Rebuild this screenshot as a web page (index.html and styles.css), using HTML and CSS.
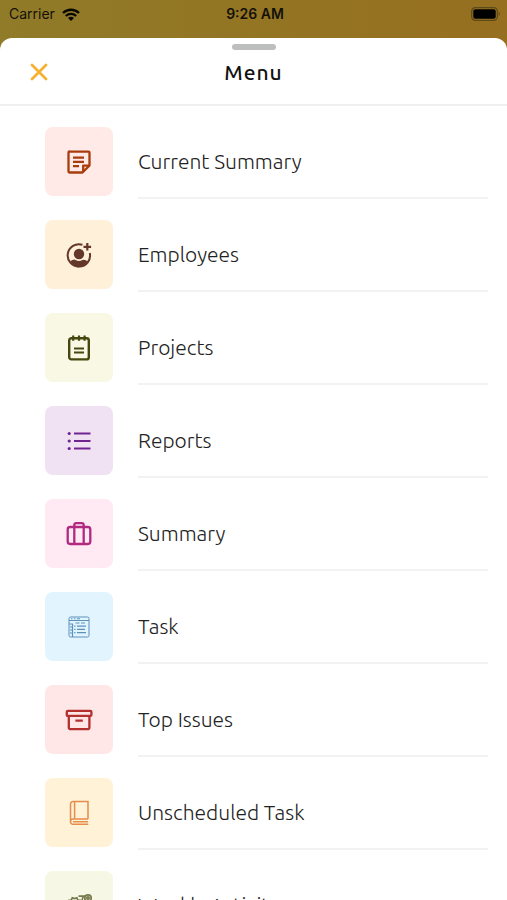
FILE: index.html
```
<!DOCTYPE html>
<html lang="en">
<head>
<meta charset="utf-8">
<meta name="viewport" content="width=device-width, initial-scale=1">
<title>Menu</title>
<link rel="stylesheet" href="styles.css">
</head>
<body>
<div class="screen">
  <div class="status">
    <div class="carrier">
      <span>Carrier</span>
      <svg class="wifi" viewBox="0 0 18 13" aria-hidden="true"><path d="M1 5a11.5 11.5 0 0 1 16 0M3.8 8a7.5 7.5 0 0 1 10.4 0" fill="none" stroke="#080704" stroke-width="2.3"/><path d="M9 13 6 10.1a4.4 4.4 0 0 1 6 0z" fill="#080704"/></svg>
    </div>
    <time class="clock">9:26 AM</time>
    <svg class="battery" viewBox="0 0 30 14" aria-hidden="true"><rect x=".7" y=".7" width="25.6" height="12.6" rx="3.6" fill="none" stroke="#5d4919" stroke-width="1.2"/><rect x="2.3" y="2.3" width="22.4" height="9.4" rx="2" fill="#000"/><path d="M27.6 4.8q2.4 2.2 0 4.4z" fill="#5d4919"/></svg>
  </div>
  <main class="sheet">
    <header class="header">
      <div class="grabber"></div>
      <div class="bar">
        <button class="close" type="button" aria-label="Close"><svg viewBox="0 0 18 18"><path d="m2 2 14 14M16 2 2 16" fill="none" stroke="#f6b032" stroke-width="2.8" stroke-linecap="round"/></svg></button>
        <h1>Menu</h1>
      </div>
    </header>
    <nav>
      <ul class="menu">
        <li><a href="#current-summary"><span class="tile coral"><svg viewBox="0 0 28 28"><g fill="none" stroke="currentColor" stroke-width="2.3" stroke-linejoin="round"><path d="M4.5 3.6h19a1 1 0 0 1 1 1v12.9l-7 7h-13a1 1 0 0 1-1-1v-19a1 1 0 0 1 1-1z"/><path d="M24.3 17.7h-6.1v6.1"/><path d="M8 9.7h11M8 13.9h11M8 18.1h6"/></g></svg></span><span class="label">Current Summary</span></a></li>
        <li><a href="#employees"><span class="tile peach"><svg viewBox="0 0 28 28"><path d="M17.4 3.8A11.2 11.2 0 1 0 24.8 12" fill="none" stroke="currentColor" stroke-width="2"/><circle cx="14" cy="13" r="5.2" fill="currentColor"/><path d="M5.2 20.2q3.5-2.3 5.3-1.3 3.5 2 7 0 2-.9 5.3 1.3-3.1 5.4-8.8 5.4t-8.8-5.4z" fill="currentColor"/><path d="M22.3 2v7.6M18.5 5.8h7.6" stroke="currentColor" stroke-width="2.2"/></svg></span><span class="label">Employees</span></a></li>
        <li><a href="#projects"><span class="tile olive"><svg viewBox="0 0 28 28"><rect x="4.2" y="4.2" width="19.6" height="21.2" rx="2.2" fill="none" stroke="currentColor" stroke-width="2.4"/><path d="M8.2 1.5v5.2M14 1.5v5.2M19.6 1.5v5.2M9 14.5h10M9 18.5h10" stroke="currentColor" stroke-width="2.2"/></svg></span><span class="label">Projects</span></a></li>
        <li><a href="#reports"><span class="tile violet"><svg viewBox="0 0 28 28"><path d="M9 6.5h16.5M9 14h16.5M9 21.5h16.5" stroke="currentColor" stroke-width="2.2"/><g fill="currentColor"><circle cx="4.2" cy="6.5" r="1.6"/><circle cx="4.2" cy="14" r="1.6"/><circle cx="4.2" cy="21.5" r="1.6"/></g></svg></span><span class="label">Reports</span></a></li>
        <li><a href="#summary"><span class="tile pink"><svg viewBox="0 0 28 28"><g fill="none" stroke="currentColor" stroke-width="2.3"><rect x="2.7" y="7" width="22.6" height="17" rx="2.4"/><path d="M9.3 24V5.2a2 2 0 0 1 2-2h5.4a2 2 0 0 1 2 2V24"/></g></svg></span><span class="label">Summary</span></a></li>
        <li><a href="#task"><span class="tile sky"><svg viewBox="0 0 28 28"><g fill="none" stroke="currentColor"><rect x="4" y="4" width="20" height="20" rx="1.5"/><path d="M4 7.5h20M6 5.8h1.5M9 5.8h1.5M12 5.8h3"/><path d="M4 11h3.5v13M10.5 10h4M16 10h4M12 13.2h9M12 16.4h8M12 19.6h9M9.2 13.2h1.3M9.2 16.4h1.3M9.2 19.6h1.3M5 20h2M5 17h2M5 14h2" stroke-width="1.2"/></g></svg></span><span class="label">Task</span></a></li>
        <li><a href="#top-issues"><span class="tile rose"><svg viewBox="0 0 28 28"><g fill="none" stroke="currentColor" stroke-width="2.3" stroke-linejoin="round"><rect x="1.8" y="4.9" width="24.6" height="5" rx="1"/><path d="M3.8 10v11.2a2 2 0 0 0 2 2h16.6a2 2 0 0 0 2-2V10M10.4 14.6h7.4"/></g></svg></span><span class="label">Top Issues</span></a></li>
        <li><a href="#unscheduled-task"><span class="tile amber"><svg viewBox="0 0 28 28"><g fill="none" stroke="currentColor" stroke-width="1.5"><path d="M23 20V2.5H8A2.5 2.5 0 0 0 5.500 5v17.700A2.500 2.500 0 0 0 8 25.200h15.200M23 20H8a2.500 2.500 0 0 0-2.500 2.500M9.600 2.500V20M8 22.700h15"/></g></svg></span><span class="label">Unscheduled Task</span></a></li>
        <li><a href="#weekly-activity"><span class="tile moss"><svg viewBox="0 0 28 28"><g fill="none" stroke="currentColor" stroke-width="1.7"><path d="M3 14.500l-1.200-3 2-1 .2-2.300 2.300-.2 1-2.200 2.400.8 2.200-.8 1 2.200 2.400.3.200 2.200 1.700 1.500-1 2.500"/><path d="M6 14a3.800 3.800 0 1 1 7.200 0M9.600 10.500v3.500M13.500 4.200H19q-2.500 2-1.500 6"/><circle cx="23" cy="6" r="3.200"/><circle cx="23" cy="6" r="1.200"/><path d="M4 22h20"/></g></svg></span><span class="label">Weekly Activity</span></a></li>
      </ul>
    </nav>
  </main>
</div>
</body>
</html>
```
FILE: styles.css
```
* {
  box-sizing: border-box;
}

body {
  margin: 0;
  color: #222;
  font-family: Ubuntu, "Noto Sans", sans-serif;
}

.screen {
  display: flex;
  flex-direction: column;
  height: 100vh;
  overflow: hidden;
  background: linear-gradient(90deg, #907b28, #966f20);
}

.status {
  display: grid;
  grid-template-columns: 1fr auto 1fr;
  align-items: center;
  flex: none;
  height: 38px;
  padding: 0 6px 10px 9px;
  color: #14110a;
  font: 14px/20px Inter, sans-serif;
}

.carrier {
  display: flex;
  align-items: center;
  gap: 7px;
}

.wifi {
  width: 18px;
  height: 13px;
}

.clock {
  font-weight: 600;
}

.battery {
  justify-self: end;
  width: 30px;
  height: 14px;
}

.sheet {
  flex: 1;
  min-height: 0;
  overflow: hidden;
  border-radius: 12px 12px 0 0;
  background: #fff;
}

.header {
  padding-top: 6px;
  border-bottom: 2px solid #efefef;
}

.grabber {
  width: 44px;
  height: 6px;
  margin: 0 auto;
  border-radius: 3px;
  background: #bdbfbe;
}

.bar {
  display: grid;
  grid-template-columns: 1fr auto 1fr;
  align-items: center;
  padding: 6px 30px 16px;
}

.close {
  width: 18px;
  height: 18px;
  padding: 0;
  border: 0;
  background: none;
}

.close svg {
  display: block;
}

h1 {
  margin: 0;
  color: #111;
  font-size: 21px;
  font-weight: 500;
  line-height: 32px;
  letter-spacing: 1px;
}

.menu {
  margin: 0;
  padding: 21px 19px 0 45px;
  list-style: none;
}

.menu a {
  display: flex;
  gap: 25px;
  height: 93px;
  color: inherit;
  text-decoration: none;
}

.tile {
  display: grid;
  place-items: center;
  flex: none;
  width: 68px;
  height: 69px;
  border-radius: 8px;
}

.tile svg {
  width: 28px;
  height: 28px;
}

.label {
  flex: 1;
  height: 72px;
  padding-top: 20px;
  border-bottom: 2px solid #f2f2f2;
  font-size: 21px;
  font-weight: 300;
  line-height: 28px;
}

.coral { background: #ffeae8; color: #a83c0c; }
.peach { background: #fff0d9; color: #633828; }
.olive { background: #f8f8e5; color: #46480f; }
.violet { background: #f0e2f3; color: #702490; }
.pink { background: #ffeaf4; color: #b12a80; }
.sky { background: #e2f5ff; color: #5c91bd; }
.rose { background: #ffe7e8; color: #b4302f; }
.amber { background: #fff2d6; color: #e58d4c; }
.moss { background: #f7f7e5; color: #777a4d; }
```
